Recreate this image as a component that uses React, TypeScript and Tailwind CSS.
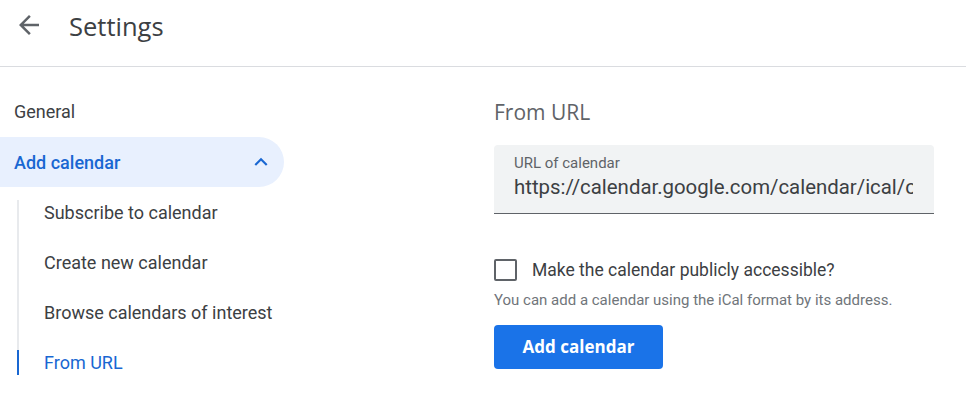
import React, { useState } from 'react';

const subItems = ['Subscribe to calendar', 'Create new calendar', 'Browse calendars of interest', 'From URL'];

const App: React.FC = () => {
  const [isPublic, setIsPublic] = useState(false);
  const [url, setUrl] = useState('https://calendar.google.com/calendar/ical/c');

  return (
    <div className="w-[966px] h-[403px] bg-white overflow-hidden text-[#3c4043]" style={{ fontFamily: 'Roboto, Arial, sans-serif' }}>
      <header className="h-[67px] flex items-start border-b border-[#dadce0]">
        <button className="w-[30px] h-[30px] mt-[10px] ml-[14px] flex items-center justify-center">
          <svg width="30" height="30" viewBox="0 0 24 24" fill="#5f6368">
            <path d="M20 11H7.83l5.59-5.59L12 4l-8 8 8 8 1.41-1.41L7.83 13H20v-2z" />
          </svg>
        </button>
        <h1 className="ml-[25px] mt-[8px] text-[25.5px] leading-[36px] text-[#3c4043]" style={{ fontFamily: '"Open Sans", Roboto, sans-serif' }}>
          Settings
        </h1>
      </header>

      <div className="flex">
        <nav className="w-[284px] pt-[19px] shrink-0">
          <div className="h-[51px] flex items-center pl-[14px] text-[18px] text-[#3c4043]">General</div>
          <div className="h-[50px] flex items-center justify-between pl-[14px] pr-[10px] bg-[#e8f0fe] rounded-r-full text-[18px] font-medium text-[#1967d2]">
            <span>Add calendar</span>
            <svg width="26" height="26" viewBox="0 0 24 24" fill="#1967d2">
              <path d="M7.41 15.41L12 10.83l4.59 4.58L18 14l-6-6-6 6z" />
            </svg>
          </div>
          <div className="flex ml-[17px]">
            <div className="w-[2px] flex flex-col shrink-0">
              <div className="h-[13px]" />
              <div className="h-[150px] bg-[#e8eaed]" />
              <div className="h-[25px] bg-[#1967d2]" />
            </div>
            <div className="flex flex-col">
              {subItems.map((item, i) => {
                const active = i === subItems.length - 1;
                return (
                  <div
                    key={item}
                    className={`h-[50px] flex items-center pl-[25px] text-[18px] ${
                      active ? 'text-[#1967d2]' : 'text-[#3c4043]'
                    }`}
                  >
                    {item}
                  </div>
                );
              })}
            </div>
          </div>
        </nav>

        <main className="ml-[210px] w-[440px] pt-[31px]">
          <h2 className="text-[21px] text-[#5f6368] leading-[28px]" style={{ fontFamily: '"Open Sans", Roboto, sans-serif' }}>
            From URL
          </h2>
          <div className="mt-[19px] h-[69px] bg-[#f1f3f4] rounded-t-[4px] border-b border-[#5f6368] pl-[20px] pr-[21px] pt-[9px] overflow-hidden">
            <label className="block text-[15px] text-[#5f6368] leading-[18px]">URL of calendar</label>
            <input
              value={url}
              onChange={(e) => setUrl(e.target.value)}
              className="w-full bg-transparent outline-none text-[20.4px] text-[#3c4043] leading-[28px] mt-[1px]"
            />
          </div>

          <label className="mt-[44px] h-[24px] flex items-center cursor-pointer">
            <span
              onClick={() => setIsPublic(!isPublic)}
              className={`w-[23px] h-[22px] rounded-[2px] border-2 shrink-0 flex items-center justify-center ${
                isPublic ? 'bg-[#1a73e8] border-[#1a73e8]' : 'border-[#5f6368]'
              }`}
            >
              {isPublic && (
                <svg width="16" height="16" viewBox="0 0 24 24" fill="white">
                  <path d="M9 16.17L4.83 12l-1.42 1.41L9 19 21 7l-1.41-1.41z" />
                </svg>
              )}
            </span>
            <span className="ml-[15px] text-[17.5px] text-[#3c4043]">Make the calendar publicly accessible?</span>
          </label>

          <p className="mt-[8px] text-[15px] leading-[20px] text-[#70757a]">You can add a calendar using the iCal format by its address.</p>

          <button className="mt-[15px] w-[169px] h-[44px] rounded-[4px] bg-[#1a73e8] text-white text-[17px] font-bold" style={{ fontFamily: '"Open Sans", Roboto, sans-serif' }}>
            Add calendar
          </button>
        </main>
      </div>
    </div>
  );
};

export default App;
